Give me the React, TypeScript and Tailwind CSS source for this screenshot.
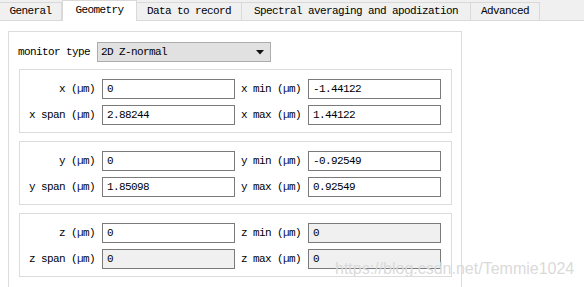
import React from "react";

const font = { fontFamily: '"Liberation Mono", "DejaVu Sans Mono", monospace' };

const tabs = [
  { label: "General", w: "w-[62px]" },
  { label: "Geometry", w: "w-[75px]", active: true },
  { label: "Data to record", w: "w-[105px]" },
  { label: "Spectral averaging and apodization", w: "w-[229px]" },
  { label: "Advanced", w: "w-[69px]" },
];

function Unit({ axis, name }: { axis: string; name: string }) {
  return (
    <span className="whitespace-pre">
      {axis}
      {name} (<span className="text-[#101060]">µ</span>m)
    </span>
  );
}

function Field({ value, disabled }: { value: string; disabled?: boolean }) {
  return (
    <div
      className={
        "w-[133px] h-[20px] border border-[#7a7a7a] flex items-center pl-[4px] " +
        (disabled ? "bg-[#f0f0f0]" : "bg-white")
      }
    >
      {value}
    </div>
  );
}

function Group({
  axis,
  c,
  span,
  min,
  max,
  dis,
}: {
  axis: string;
  c: string;
  span: string;
  min: string;
  max: string;
  dis?: boolean;
}) {
  const row = (l1: string, v1: string, d1: boolean, l2: string, v2: string, d2: boolean) => (
    <div className="flex items-center h-[20px]">
      <div className="w-[75px] text-right">
        <Unit axis={axis} name={l1} />
      </div>
      <div className="ml-[7px]">
        <Field value={v1} disabled={d1} />
      </div>
      <div className="w-[60px] ml-[6px]">
        <Unit axis={axis} name={l2} />
      </div>
      <div className="ml-[7px]">
        <Field value={v2} disabled={d2} />
      </div>
    </div>
  );
  return (
    <div className="w-[433px] h-[64px] border border-[#dcdcdc] pt-[9px] flex flex-col gap-[6px]">
      {row("", c, false, " min", min, !!dis)}
      {row(" span", span, !!dis, " max", max, !!dis)}
    </div>
  );
}

export default function App() {
  return (
    <div
      className="relative w-[584px] h-[287px] overflow-hidden bg-white text-[11px] tracking-[-0.6px] text-[#000]"
      style={font}
    >
      <div className="flex h-[21px] bg-[#f0f0f0] border-b border-[#d9d9d9] items-end">
        {tabs.map((t) =>
          t.active ? (
            <div
              key={t.label}
              className={t.w + " h-[21px] -mb-px bg-white border border-b-0 border-[#d9d9d9] flex items-center justify-center pb-[1px] relative z-10"}
            >
              {t.label}
            </div>
          ) : (
            <div
              key={t.label}
              className={t.w + " h-[18px] border-t border-r border-[#d9d9d9] flex items-center justify-center"}
            >
              {t.label}
            </div>
          )
        )}
      </div>
      <div className="pl-[8px] pt-[10px]">
        <div className="w-[454px] h-[300px] border border-[#dcdcdc] pt-[10px] pl-[10px]">
          <div className="flex items-center h-[20px]">
            <span className="-ml-px">monitor type</span>
            <div className="ml-[7px] w-[174px] h-[20px] bg-[#e1e1e1] border border-[#adadad] flex items-center justify-between pl-[3px] pr-[6px]">
              <span>2D Z-normal</span>
              <svg width="8" height="5" viewBox="0 0 8 5">
                <polygon points="0,0 8,0 4,4.5" fill="#111" />
              </svg>
            </div>
          </div>
          <div className="mt-[7px] flex flex-col gap-[8px]">
            <Group axis="x" c="0" span="2.88244" min="-1.44122" max="1.44122" />
            <Group axis="y" c="0" span="1.85098" min="-0.92549" max="0.92549" />
            <Group axis="z" c="0" span="0" min="0" max="0" dis />
          </div>
        </div>
      </div>
      <div
        className="absolute left-[335px] top-[257px] text-[16px] tracking-normal text-[#dadada]"
        style={{ fontFamily: '"Liberation Sans", Arial, sans-serif' }}
      >
        https://blog.csdn.net/Temmie1024
      </div>
    </div>
  );
}
